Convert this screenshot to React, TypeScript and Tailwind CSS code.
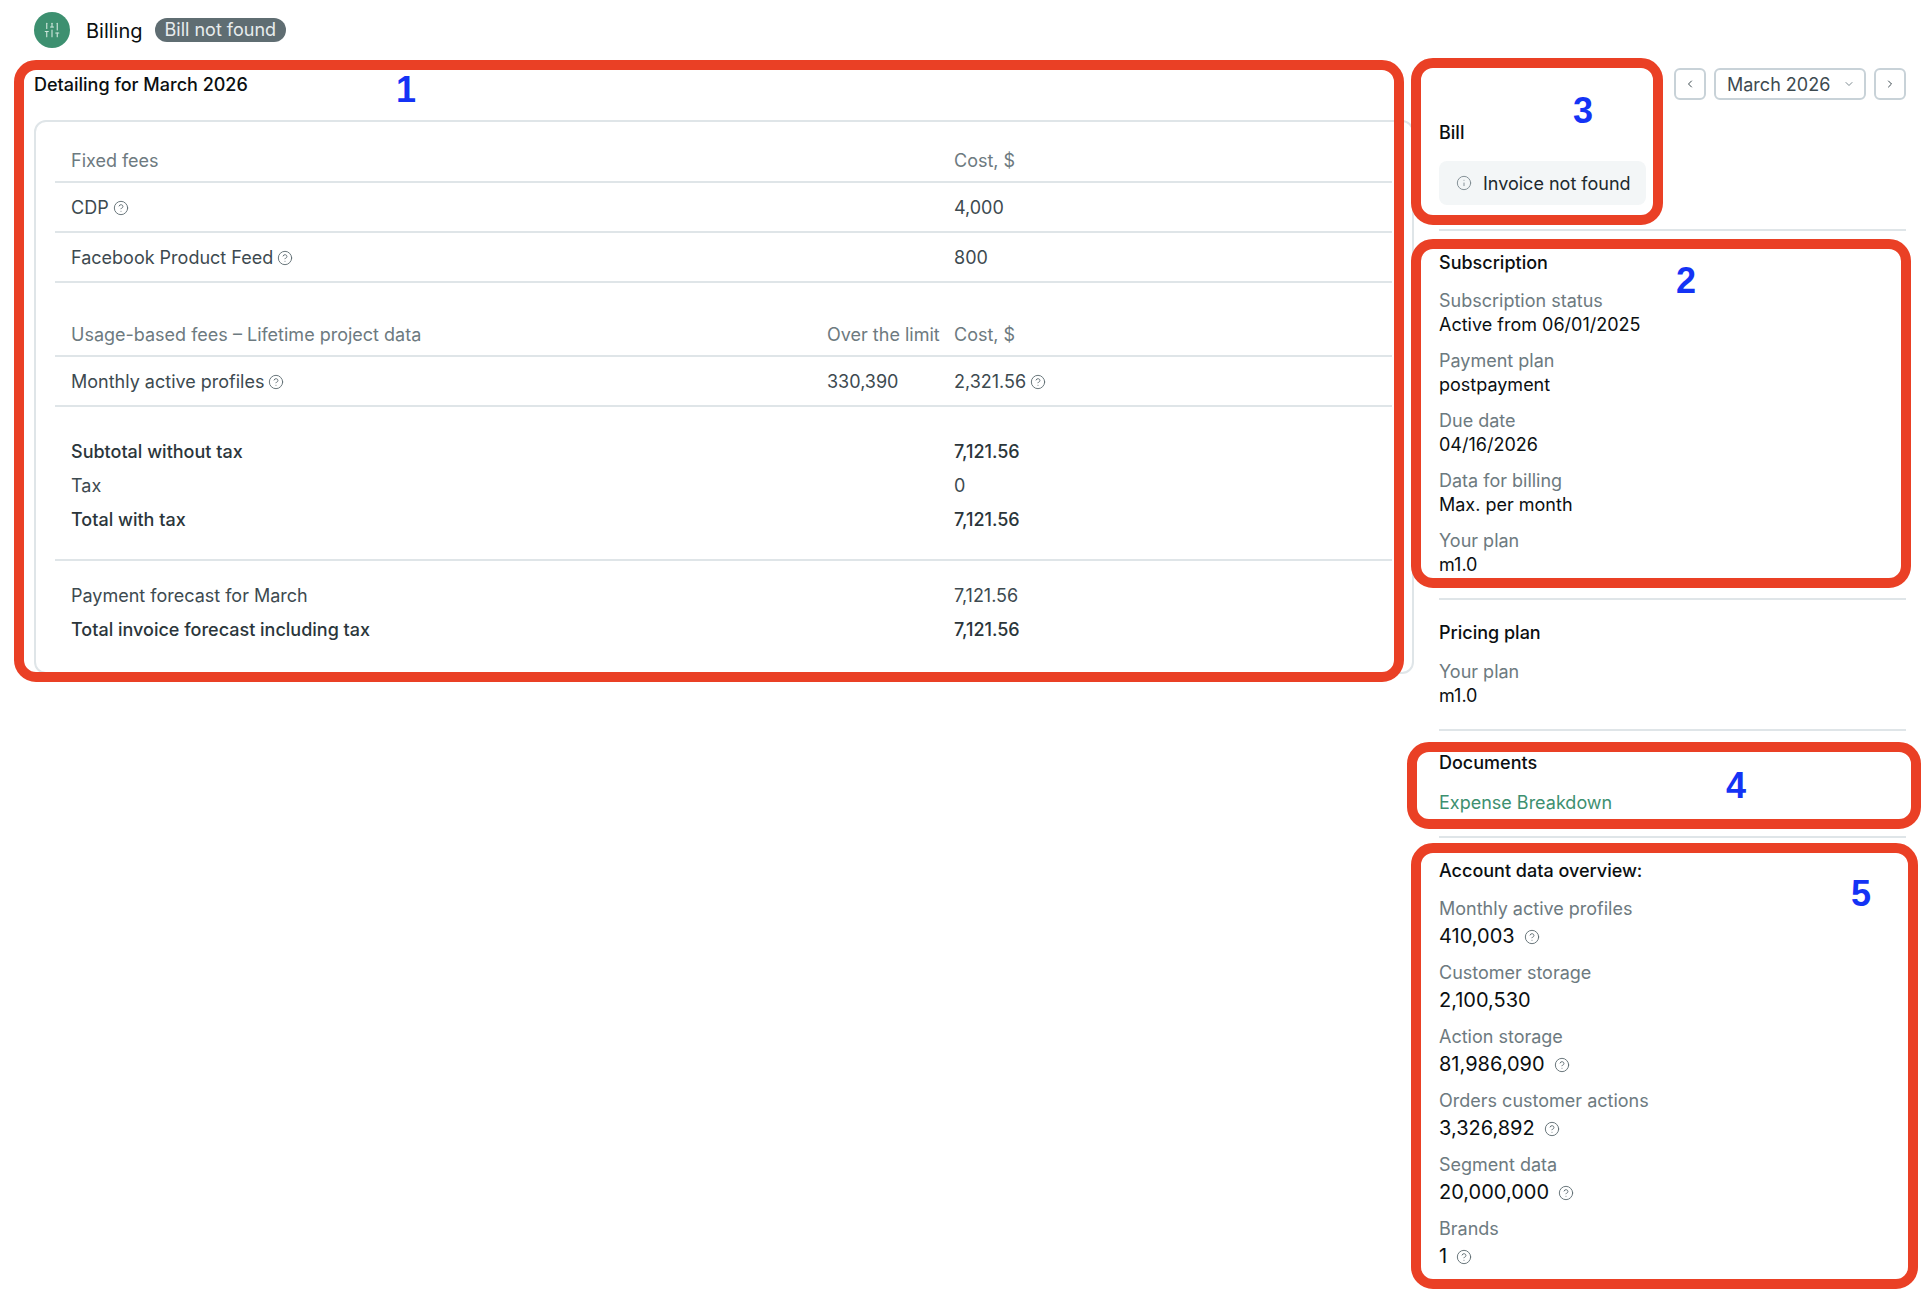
import { ChevronDown, ChevronLeft, ChevronRight, CircleHelp, Info, SlidersVertical } from "lucide-react";

const Help = () => <CircleHelp className="inline-block w-4 h-4 translate-y-[1px] text-[#5f6d72]" strokeWidth={1.4} />;

function Row({ a, b, c, cls = "", help = false, bHelp = false }: { a: string; b?: string; c: string; cls?: string; help?: boolean; bHelp?: boolean }) {
  return (
    <div className={`grid grid-cols-[756px_127px_1fr] px-4 items-center ${cls}`}>
      <div className="flex items-center gap-1">{a}{help && <Help />}</div>
      <div>{b}</div>
      <div className="flex items-center gap-1">{c}{bHelp && <Help />}</div>
    </div>
  );
}

function Field({ label, value }: { label: string; value: string }) {
  return (
    <div className="h-[60px] pt-[3px]">
      <div className="text-[#6d7a80] leading-6">{label}</div>
      <div className="text-[#0b0f11] leading-6">{value}</div>
    </div>
  );
}

function Metric({ label, value, help = true }: { label: string; value: string; help?: boolean }) {
  return (
    <div className="h-16">
      <div className="text-[#6d7a80] leading-6">{label}</div>
      <div className="flex items-center gap-[9px] h-[30px] text-[20px] text-[#0b0f11]">{value}{help && <Help />}</div>
    </div>
  );
}

const Mark = ({ cls }: { cls: string }) => <div className={`absolute border-[10px] border-[#ea4025] rounded-[22px] pointer-events-none ${cls}`} />;
const Num = ({ n, cls }: { n: number; cls: string }) => <div className={`absolute font-bold text-[36px] leading-none text-[#1433f5] font-['Liberation_Sans',sans-serif] ${cls}`}>{n}</div>;

export default function App() {
  return (
    <div className="relative w-[1930px] h-[1310px] bg-white overflow-hidden font-['Inter',sans-serif] text-[18px] text-[#3d4a50]">
      <header className="h-[60px] pl-[34px] flex items-center gap-[16px] pb-[1px]">
        <div className="w-9 h-9 rounded-full bg-[#3d9070] flex items-center justify-center text-[#cfe6dc]">
          <SlidersVertical className="w-[18px] h-[18px]" strokeWidth={1.5} />
        </div>
        <div className="text-[20px] text-[#0b0f11] pt-[2px]">Billing</div>
        <div className="-ml-1 h-6 px-[10px] rounded-full bg-[#5f6d72] text-[#e8eced] flex items-center text-[18px]">Bill not found</div>
      </header>

      <div className="flex pl-[34px] pr-[24px]">
        <main className="w-[1380px] shrink-0">
          <h2 className="h-[60px] pt-[13px] text-[#0b0f11] leading-6 font-medium">Detailing for March 2026</h2>
          <section className="h-[554px] border-2 border-[#dfe5e8] rounded-xl py-[19px] pr-5 pl-[19px]">
            <Row a="Fixed fees" c="Cost, $" cls="h-[42px] pb-[2px] text-[#6d7a80] border-b-2 border-[#dfe5e8]" />
            <Row a="CDP" help c="4,000" cls="h-[50px] border-b-2 border-[#dfe5e8]" />
            <Row a="Facebook Product Feed" help c="800" cls="h-[50px] border-b-2 border-[#dfe5e8]" />
            <Row a="Usage-based fees – Lifetime project data" b="Over the limit" c="Cost, $" cls="mt-[31px] h-[43px] text-[#6d7a80] border-b-2 border-[#dfe5e8]" />
            <Row a="Monthly active profiles" help b="330,390" c="2,321.56" bHelp cls="h-[50px] border-b-2 border-[#dfe5e8]" />
            <div className="h-[154px] pt-[27px] border-b-2 border-[#dfe5e8]">
              <Row a="Subtotal without tax" c="7,121.56" cls="h-[34px] font-medium text-[#2b363b]" />
              <Row a="Tax" c="0" cls="h-[34px]" />
              <Row a="Total with tax" c="7,121.56" cls="h-[34px] font-medium text-[#2b363b]" />
            </div>
            <div className="pt-[17px]">
              <Row a="Payment forecast for March" c="7,121.56" cls="h-[34px]" />
              <Row a="Total invoice forecast including tax" c="7,121.56" cls="h-[34px] font-medium text-[#2b363b]" />
            </div>
          </section>
        </main>

        <aside className="ml-[25px] flex-1 min-w-0">
          <div className="flex justify-end gap-2 h-[60px] pt-2">
            <button className="w-8 h-8 rounded-md border-2 border-[#c8d2d8] flex items-center justify-center text-[#3d4a50]"><ChevronLeft className="w-3 h-3" /></button>
            <button className="w-[152px] h-8 rounded-md border-2 border-[#c8d2d8] flex items-center justify-between pl-[11px] pr-[9px] text-[#3d4a50]">March 2026<ChevronDown className="w-3 h-3 text-[#7d8a90]" /></button>
            <button className="w-8 h-8 rounded-md border-2 border-[#c8d2d8] flex items-center justify-center text-[#3d4a50]"><ChevronRight className="w-3 h-3" /></button>
          </div>
          <section className="-mt-[1px] h-[112px] border-b-2 border-[#dfe5e8]">
            <div className="pt-[2px] leading-6 text-[#0b0f11] font-medium">Bill</div>
            <div className="mt-[16px] w-[207px] h-11 rounded-lg bg-[#f3f6f7] flex items-center pl-[17px] gap-[11px] text-[#20292d]"><Info className="w-4 h-4 text-[#7d8a90]" strokeWidth={1.4} />Invoice not found</div>
          </section>
          <section className="h-[369px] border-b-2 border-[#dfe5e8] pt-[20px]">
            <div className="leading-6 text-[#0b0f11] font-medium h-[25px]">Subscription</div>
            <div className="h-[10px]" />
            <Field label="Subscription status" value="Active from 06/01/2025" />
            <Field label="Payment plan" value="postpayment" />
            <Field label="Due date" value="04/16/2026" />
            <Field label="Data for billing" value="Max. per month" />
            <Field label="Your plan" value="m1.0" />
          </section>
          <section className="h-[131px] border-b-2 border-[#dfe5e8] pt-[21px]">
            <div className="leading-6 text-[#0b0f11] font-medium">Pricing plan</div>
            <div className="mt-[15px] text-[#6d7a80] leading-6">Your plan</div>
            <div className="text-[#0b0f11] leading-6">m1.0</div>
          </section>
          <section className="h-[107px] border-b-2 border-[#dfe5e8] pt-[20px]">
            <div className="leading-6 text-[#0b0f11] font-medium">Documents</div>
            <div className="mt-4 leading-6 text-[#3d9070]">Expense Breakdown</div>
          </section>
          <section className="pt-[21px]">
            <div className="leading-6 text-[#0b0f11] font-medium h-[38px]">Account data overview:</div>
            <Metric label="Monthly active profiles" value="410,003" />
            <Metric label="Customer storage" value="2,100,530" help={false} />
            <Metric label="Action storage" value="81,986,090" />
            <Metric label="Orders customer actions" value="3,326,892" />
            <Metric label="Segment data" value="20,000,000" />
            <Metric label="Brands" value="1" />
          </section>
        </aside>
      </div>

      <Mark cls="left-[14px] top-[60px] w-[1390px] h-[622px]" />
      <Mark cls="left-[1411px] top-[58px] w-[252px] h-[167px]" />
      <Mark cls="left-[1411px] top-[239px] w-[500px] h-[349px]" />
      <Mark cls="left-[1407px] top-[742px] w-[514px] h-[87px]" />
      <Mark cls="left-[1411px] top-[843px] w-[507px] h-[446px]" />
      <Num n={1} cls="left-[396px] top-[72px]" />
      <Num n={3} cls="left-[1573px] top-[93px]" />
      <Num n={2} cls="left-[1676px] top-[263px]" />
      <Num n={4} cls="left-[1726px] top-[768px]" />
      <Num n={5} cls="left-[1851px] top-[876px]" />
    </div>
  );
}
